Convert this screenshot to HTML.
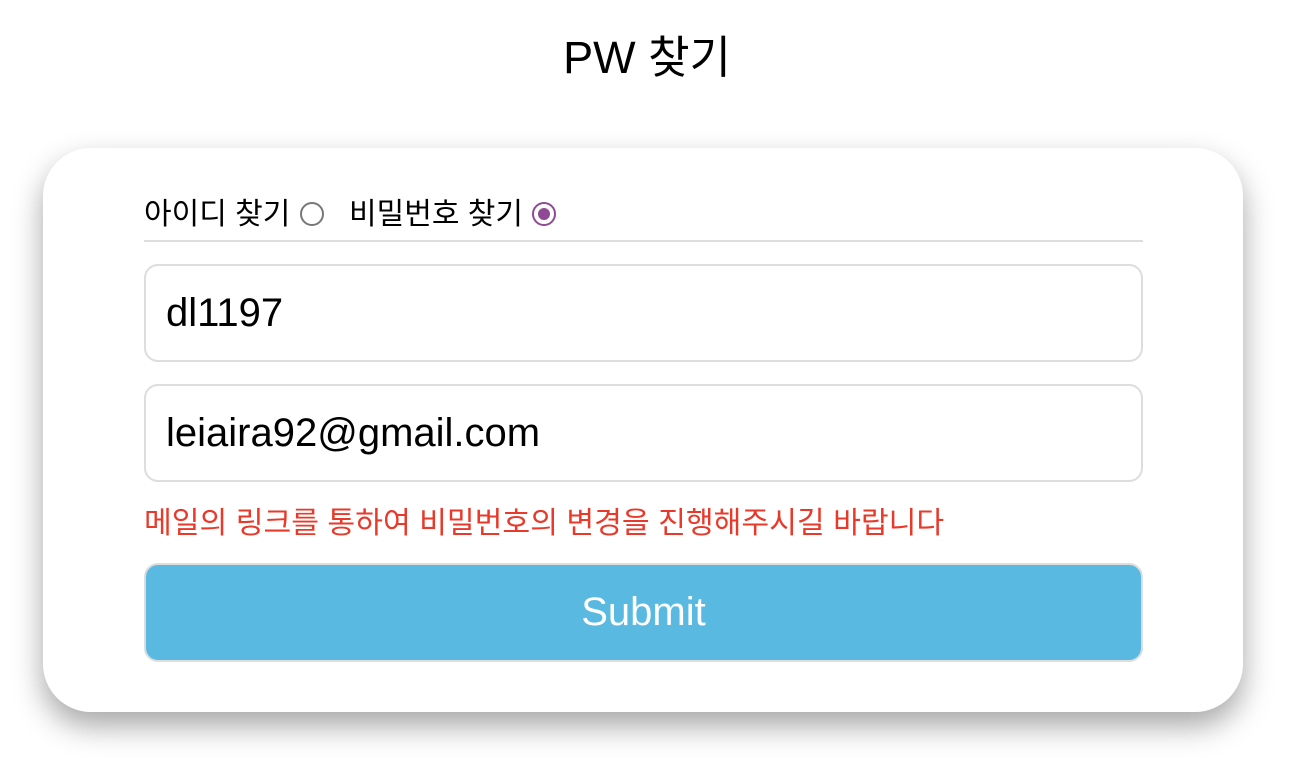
<!DOCTYPE html>
<html><head><meta charset="utf-8"><style>
body{margin:0;width:1294px;height:758px;background:#fff;font-family:"Liberation Sans","Noto Sans CJK KR",sans-serif;position:relative;overflow:hidden}
.t{position:absolute;top:26px;left:0;width:1294px;text-align:center;font-size:45px;line-height:64px;color:#000}
.card{position:absolute;left:43px;top:148px;width:1200px;height:564px;background:#fff;border-radius:48px;box-shadow:0 14px 30px rgba(0,0,0,.35)}
.r{position:absolute;top:192px;left:144px;font-size:30px;line-height:46px;color:#000;white-space:nowrap}
.rad{display:inline-block;width:24px;height:24px;border:2px solid #777;border-radius:50%;box-sizing:border-box;vertical-align:-2px;margin-left:8px}
.rad.on{border-color:#8e4a94;position:relative}
.rad.on:after{content:"";position:absolute;left:4px;top:4px;width:12px;height:12px;border-radius:50%;background:#8e4a94}
.hr{position:absolute;left:144px;top:240px;width:999px;height:2px;background:#ddd}
.in{position:absolute;left:144px;width:999px;height:98px;box-sizing:border-box;border:2px solid #ddd;border-radius:14px;font-size:40px;line-height:94px;padding-left:20px;color:#000}
.msg{position:absolute;left:144px;top:501px;font-size:30.2px;line-height:46px;color:#e8392a;white-space:nowrap}
.btn{position:absolute;left:144px;top:563px;width:999px;height:99px;box-sizing:border-box;border:2px solid #ddd;border-radius:14px;background:#5ab9e1;color:#fff;font-size:40px;line-height:95px;text-align:center}
</style></head><body>
<div class="t">PW 찾기</div>
<div class="card"></div>
<div class="r">아이디 찾기<span class="rad" style="margin-left:10px;margin-right:8px"></span>&nbsp; 비밀번호 찾기<span class="rad on" style="margin-left:9px"></span></div>
<div class="hr"></div>
<div class="in" style="top:264px">dl1197</div>
<div class="in" style="top:384px">leiaira92@gmail.com</div>
<div class="msg">메일의 링크를 통하여 비밀번호의 변경을 진행해주시길 바랍니다</div>
<div class="btn">Submit</div>
</body></html>
